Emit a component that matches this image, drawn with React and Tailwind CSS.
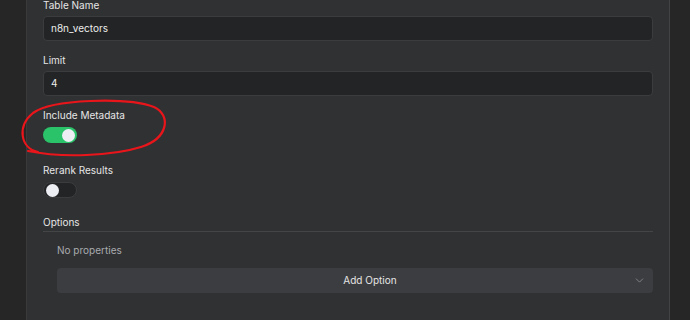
import React from 'react'
import { ChevronDown } from 'lucide-react'

const font = { fontFamily: 'Inter, "Noto Sans", sans-serif' }

function Field({ label, value }) {
  return (
    <div className="flex flex-col h-[44px]">
      <label className="text-[10px] leading-4 text-[#e6e6e6]">{label}</label>
      <div className="mt-[3px] h-[25px] rounded-[4px] border border-[#3b3c3e] bg-[#232425] px-[7px] flex items-center text-[10px] text-[#ececec]">
        {value}
      </div>
    </div>
  )
}

function Toggle({ label, on }) {
  return (
    <div className="flex flex-col h-[44px]">
      <label className="text-[10px] leading-4 text-[#e6e6e6]">{label}</label>
      <div
        className={`mt-1 w-[34px] h-4 rounded-full flex items-center px-[2px] ${
          on ? 'bg-[#2ac36a] justify-end' : 'bg-[#232425] border border-[#3b3c3e] justify-start'
        }`}
      >
        <div className="w-[13px] h-[13px] rounded-full bg-[#eceef4]" />
      </div>
    </div>
  )
}

export default function App() {
  return (
    <div style={font} className="relative w-[690px] h-[320px] overflow-hidden flex bg-[#262626]">
      <div className="w-[27px] border-r border-[#3a3a3a]" />
      <div className="flex-1 bg-[#303133] px-4 border-r border-[#424345]">
        <div className="-mt-[3px] flex flex-col gap-[11px]">
          <Field label="Table Name" value="n8n_vectors" />
          <Field label="Limit" value="4" />
          <Toggle label="Include Metadata" on />
          <Toggle label="Rerank Results" />
        </div>
        <div className="mt-2">
          <div className="text-[10px] leading-4 text-[#e6e6e6] pb-[1px] border-b border-[#444547]">Options</div>
          <div className="pl-[14px]">
            <div className="mt-[10px] text-[10px] leading-4 text-[#a9abaf]">No properties</div>
            <button className="mt-[10px] w-full h-[25px] rounded-[4px] bg-[#3c3d40] relative flex items-center justify-center pl-[30px] text-[10px] text-[#e6e6e6]">
              Add Option
              <ChevronDown className="absolute right-[7px] w-[13px] h-[13px] text-[#8d8f93]" strokeWidth={1.5} />
            </button>
          </div>
        </div>
      </div>
      <div className="w-[20px]" />
      <svg className="absolute inset-0 pointer-events-none" width="690" height="320" viewBox="0 0 690 320">
        <path
          d="M38 152 C20 148 17 126 33 113 C52 99 127 97 154 107 C171 115 169 138 141 147 C112 156 62 158 28 151"
          fill="none"
          stroke="#e8151b"
          strokeWidth="2.2"
          strokeLinecap="round"
        />
      </svg>
    </div>
  )
}
